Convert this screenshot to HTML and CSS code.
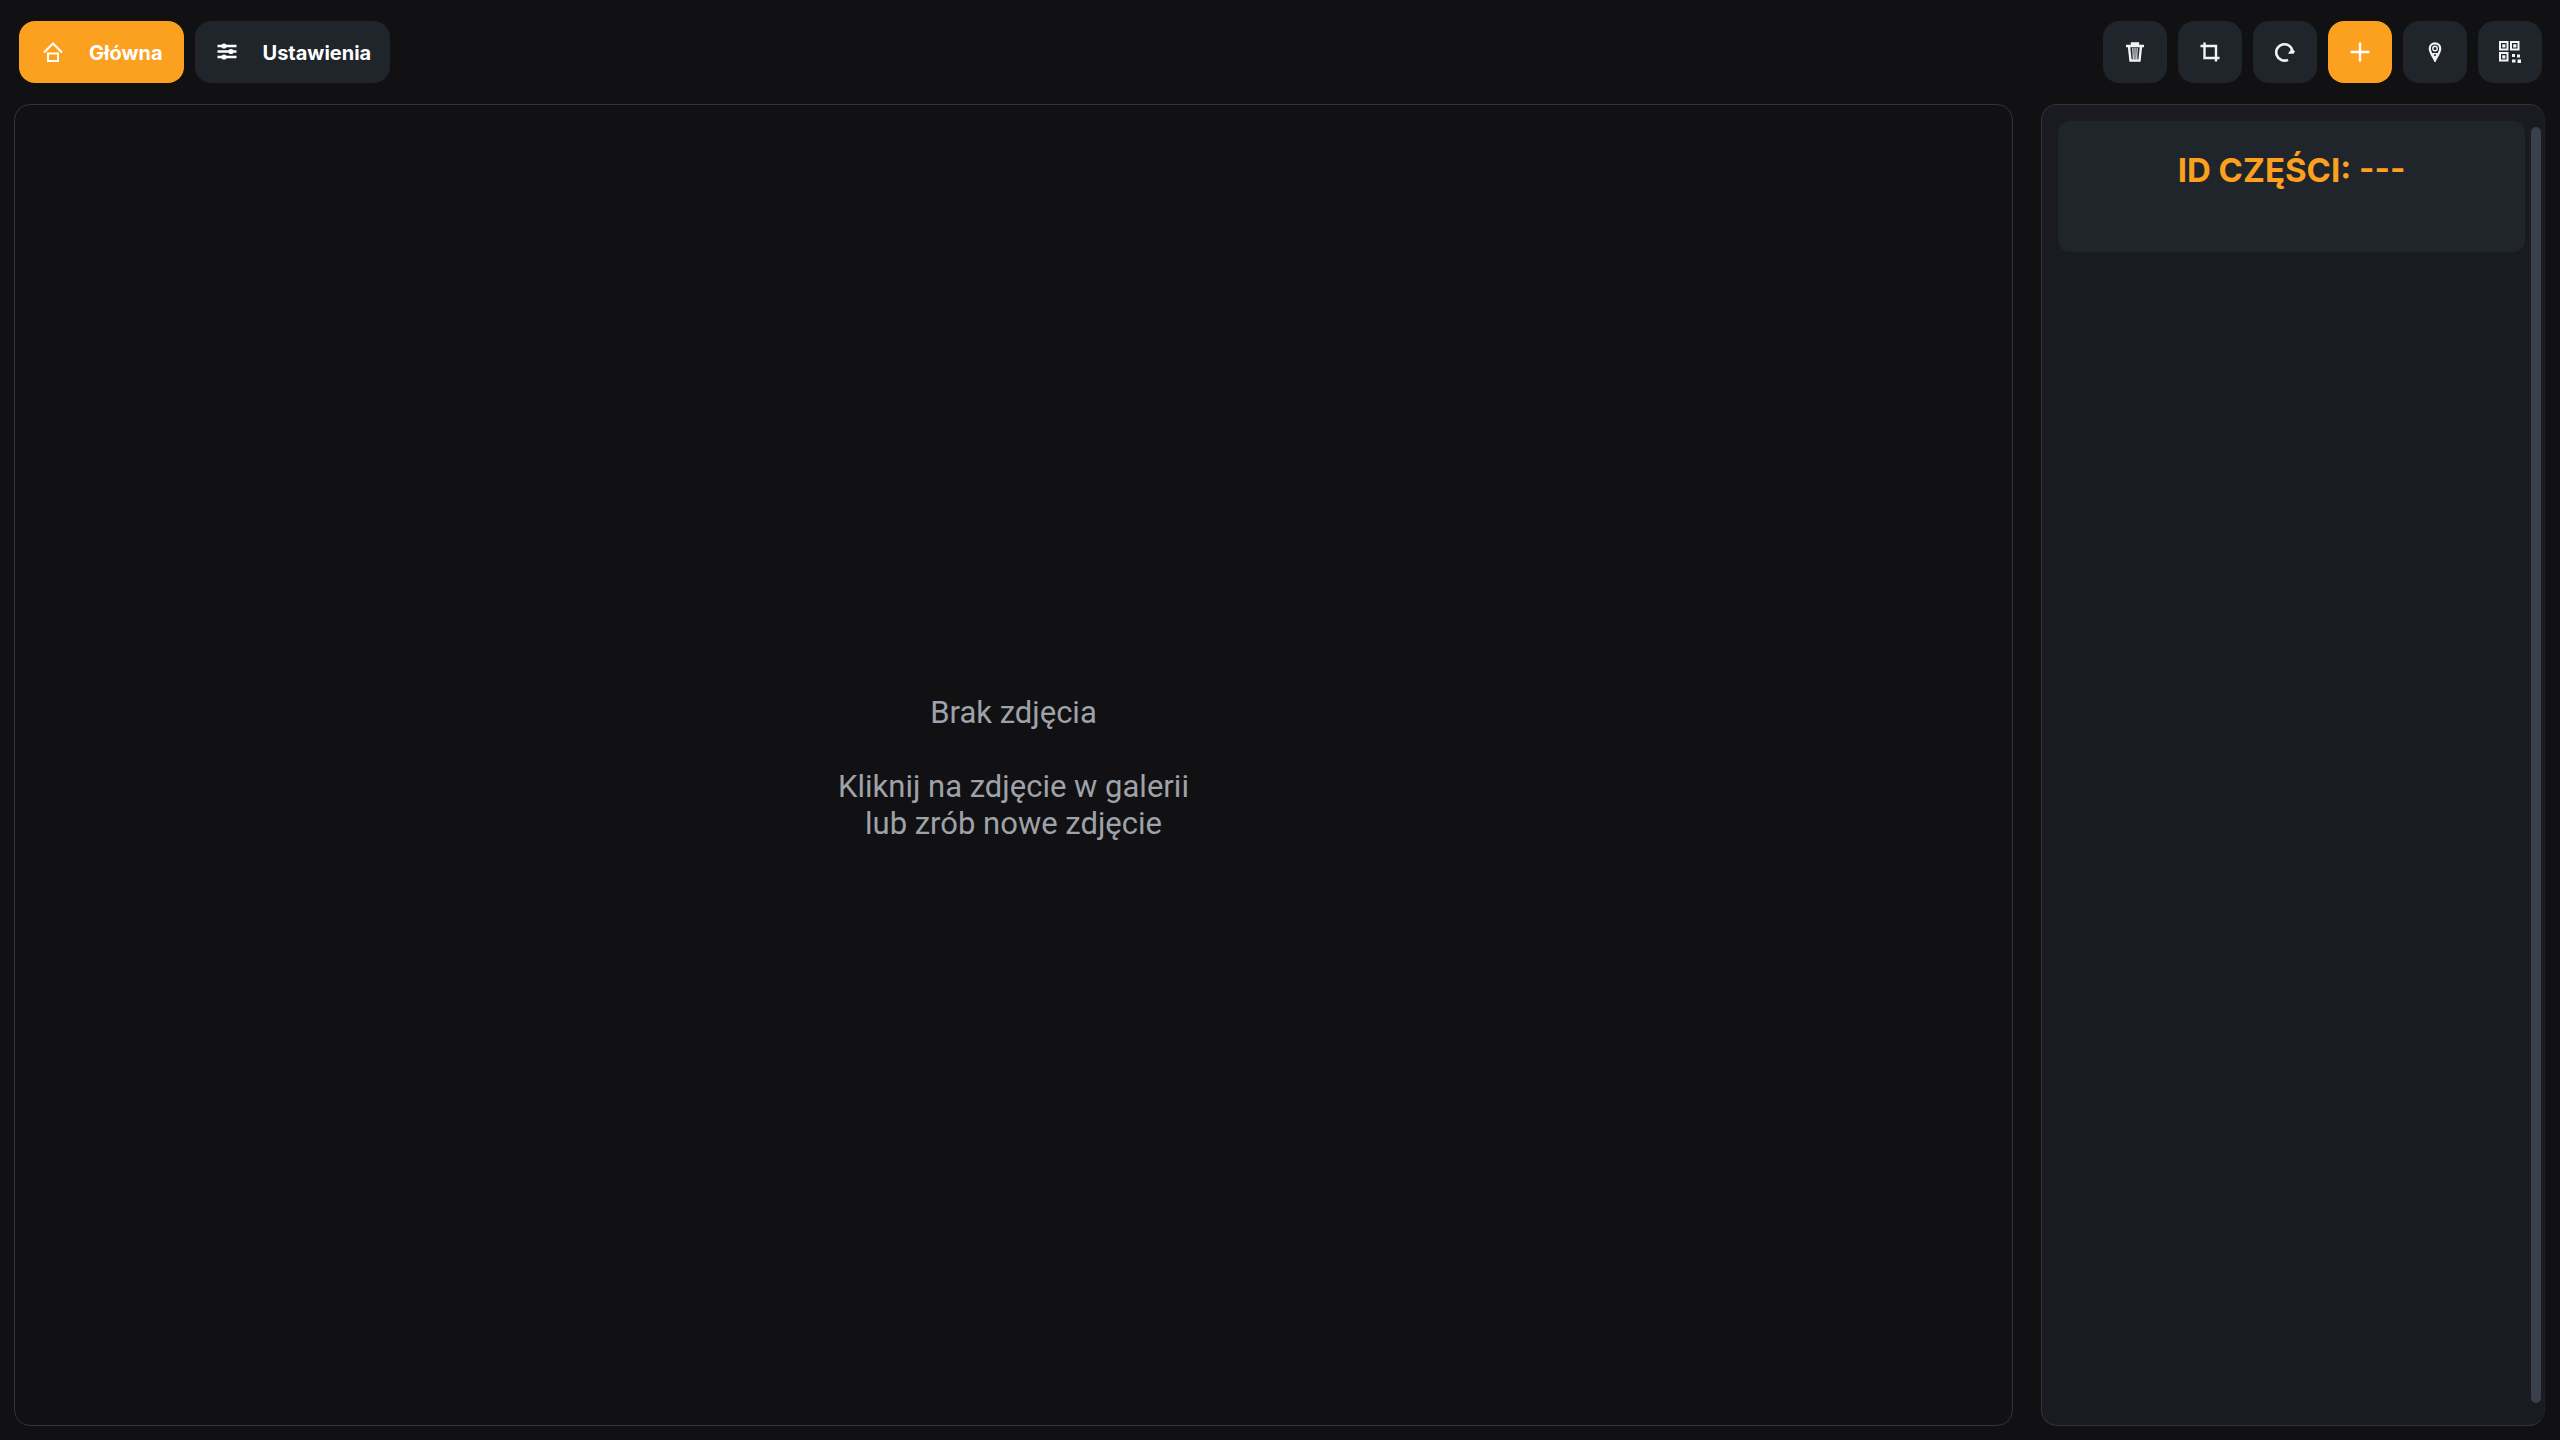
FILE: index.html
```html
<!DOCTYPE html>
<html lang="pl">
<head>
<meta charset="utf-8">
<title>Zdjęcia części</title>
<link rel="stylesheet" href="styles.css">
</head>
<body>
<header class="toolbar">
  <nav class="tabs">
    <button class="btn tab tab-home active" type="button">
      <svg class="icon" viewBox="0 0 20 20" fill="none" stroke="currentColor" stroke-width="2"><path d="M1 10.500 10 1.500l9 9M5 11.500h10v7.500H5z"/></svg>
      <span>Główna</span>
    </button>
    <button class="btn tab" type="button">
      <svg class="icon" viewBox="0 0 20 20" fill="none" stroke="currentColor" stroke-width="2.400"><path d="M.5 4h19M.5 9.500h19M.5 15h19"/><g fill="currentColor" stroke="none"><circle cx="7" cy="4" r="2.600"/><circle cx="14" cy="9.500" r="2.600"/><circle cx="7" cy="15" r="2.600"/></g></svg>
      <span>Ustawienia</span>
    </button>
  </nav>
  <div class="actions">
    <button class="btn tool" type="button" aria-label="Usuń">
      <svg class="icon" viewBox="0 0 20 20" fill="none" stroke="currentColor"><path stroke-width="2.400" d="M1 4h18M7 3.500V1.500h6v2M4 4.500l1.500 14h9L16 4.500"/><path stroke-width="1.100" d="M7.800 6l.5 11M10 6v11M12.200 6l-.5 11"/></svg>
    </button>
    <button class="btn tool" type="button" aria-label="Przytnij">
      <svg class="icon" viewBox="0 0 20 20" fill="none" stroke="currentColor" stroke-width="2.400"><path d="M4.500.5v15.500H19.500M.5 4h15.500v15.500"/></svg>
    </button>
    <button class="btn tool" type="button" aria-label="Obróć">
      <svg class="icon" viewBox="0 0 20 20" fill="none" stroke="currentColor" stroke-width="2.600"><path d="M13 17.800A8.200 8.200 0 1 1 17.500 9"/><path fill="currentColor" stroke="none" d="M13 11.800h5.500l1.500-2.300-3.500-3z"/></svg>
    </button>
    <button class="btn tool active" type="button" aria-label="Dodaj">
      <svg class="icon" viewBox="0 0 20 20" fill="none" stroke="currentColor" stroke-width="2.400"><path d="M10 .5v19M.5 10h19"/></svg>
    </button>
    <button class="btn tool" type="button" aria-label="Lokalizacja">
      <svg class="icon" viewBox="0 0 20 20" fill="none" stroke="currentColor" stroke-width="2.200"><path d="M10 18.500C9 15.500 4.800 11 4.800 6.500a5.200 5.200 0 0 1 10.400 0C15.200 11 11 15.500 10 18.500z"/><circle cx="10" cy="6.500" r="2.200" stroke-width="1.400"/><path stroke="none" fill="currentColor" d="M7 11h6l-3 7z"/><circle cx="10" cy="13" r="1" fill="#20242c" stroke="none"/></svg>
    </button>
    <button class="btn tool" type="button" aria-label="Kod QR">
      <svg class="icon icon-qr" viewBox="0 0 22 22" fill="none" stroke="currentColor" stroke-width="2"><path d="M1 1h7.500v7.500H1zM12 1h7.500v7.500H12zM1 12h7.500v7.500H1z"/><g fill="currentColor" stroke="none"><path d="M3.200 3.200h3.200v3.200H3.200zM14.200 3.200h3.200v3.200h-3.200zM3.200 14.200h3.200v3.200H3.200zM13 13h3v3h-3zM18 13.500h3v3h-3zM13 18.500h3.500v3H13zM18.500 18.500h3.500V22h-3.500z"/></g></svg>
    </button>
  </div>
</header>
<main class="workspace">
  <section class="panel viewer">
    <p class="empty">Brak zdjęcia<br><br>Kliknij na zdjęcie w galerii<br>lub zrób nowe zdjęcie</p>
  </section>
  <aside class="panel sidebar">
    <div class="card"><h1 class="part-id">ID CZĘŚCI: ---</h1></div>
    <div class="scrollbar"><div class="thumb"></div></div>
  </aside>
</main>
</body>
</html>
```
FILE: styles.css
```css
* { box-sizing: border-box; }
body {
  margin: 0;
  min-height: 100vh;
  display: flex;
  flex-direction: column;
  background: #111113;
  color: #fff;
  font-family: Inter, "Liberation Sans", sans-serif;
}
.toolbar {
  display: flex;
  justify-content: space-between;
  padding: 21px 18px 21px 19px;
}
.tabs, .actions { display: flex; gap: 11px; }
.btn {
  display: flex;
  align-items: center;
  justify-content: center;
  height: 62px;
  padding: 0;
  border: 0;
  border-radius: 16px;
  background: #20242b;
  color: #f2f3f5;
  font: 700 20px/24px Inter, "Liberation Sans", sans-serif;
}
.btn.active { background: #fba01f; color: #fff; }
.tab { gap: 26px; padding: 2px 19px 0 22px; color: #fff; }
.tab-home { padding: 2px 21px 0 24px; }
.tool { width: 64px; }
.icon { width: 20px; height: 20px; flex: none; }
.tab .icon { margin-bottom: 3px; }
.icon-qr { width: 22px; height: 22px; }
.workspace {
  flex: 1;
  display: grid;
  grid-template-columns: minmax(0, 1fr) 504px;
  gap: 28px;
  padding: 0 15px 14px 14px;
}
.panel { border: 1px solid #30343b; border-radius: 16px; }
.viewer { display: flex; align-items: center; justify-content: center; }
.empty {
  margin: 0;
  padding-top: 6px;
  color: #9fa2a8;
  font-family: Roboto, "Liberation Sans", sans-serif;
  font-size: 31px;
  line-height: 37px;
  text-align: center;
}
.sidebar {
  display: flex;
  align-items: flex-start;
  gap: 6px;
  padding: 16px 0 16px 16px;
  border-right-color: #1d2025;
  background: #191b20;
}
.card {
  flex: 1;
  min-height: 131px;
  padding: 28px 16px;
  border-radius: 12px;
  background: #20242b;
}
.part-id {
  margin: 0;
  color: #fba01f;
  font-size: 33px;
  line-height: 43px;
  text-align: center;
}
.scrollbar { align-self: stretch; width: 13px; padding: 6px 3px 6px 0; }
.thumb { height: 100%; border-radius: 5px; background: #3a404b; }
```
